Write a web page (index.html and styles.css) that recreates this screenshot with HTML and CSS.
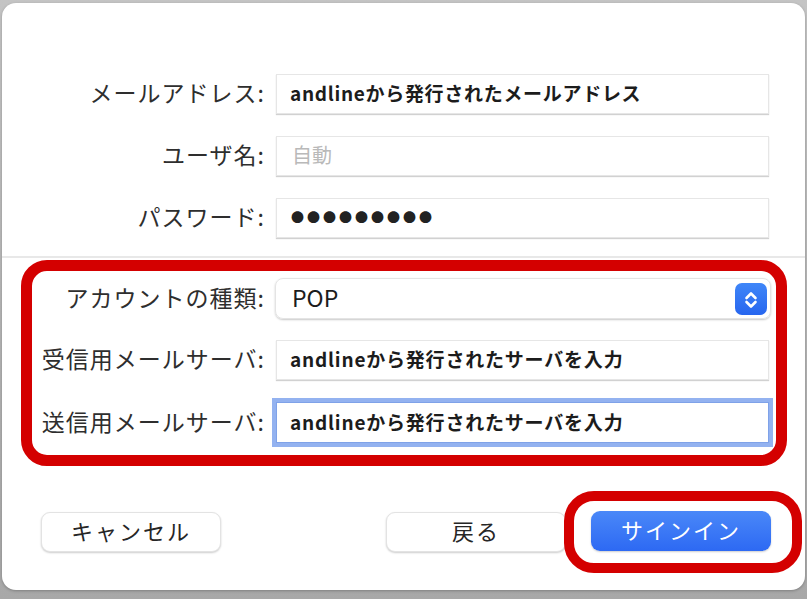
FILE: index.html
```html
<!DOCTYPE html>
<html lang="ja">
<head>
    <meta charset="UTF-8">
    <meta name="viewport" content="width=device-width, initial-scale=1.0">
    <title>アカウントを追加</title>
    <link rel="stylesheet" href="styles.css">
</head>
<body>
    <div class="dialog">
        <div class="account">
            <div class="row">
                <span class="label">メールアドレス:</span>
                <div class="field"><span class="value">andlineから発行されたメールアドレス</span></div>
            </div>
            <div class="row">
                <span class="label">ユーザ名:</span>
                <div class="field"><span class="placeholder">自動</span></div>
            </div>
            <div class="row">
                <span class="label">パスワード:</span>
                <div class="field"><span class="dots">●●●●●●●●●</span></div>
            </div>
        </div>

        <div class="server-box">
            <div class="row">
                <span class="label">アカウントの種類:</span>
                <div class="select">
                    <span class="select-value">POP</span>
                    <span class="stepper">
                        <svg width="32" height="32" viewBox="0 0 32 32">
                            <path d="M11.5 15 L16 10.5 L20.5 15" fill="none" stroke="#fff" stroke-width="2.6" stroke-linecap="round" stroke-linejoin="round"/>
                            <path d="M11.5 19 L16 23.5 L20.5 19" fill="none" stroke="#fff" stroke-width="2.6" stroke-linecap="round" stroke-linejoin="round"/>
                        </svg>
                    </span>
                </div>
            </div>
            <div class="row">
                <span class="label">受信用メールサーバ:</span>
                <div class="field"><span class="value wide">andlineから発行されたサーバを入力</span></div>
            </div>
            <div class="row">
                <span class="label">送信用メールサーバ:</span>
                <div class="field focused"><span class="value wide">andlineから発行されたサーバを入力</span></div>
            </div>
        </div>

        <div class="actions">
            <button class="btn">キャンセル</button>
            <button class="btn back">戻る</button>
            <span class="mark"><button class="btn primary">サインイン</button></span>
        </div>
    </div>
</body>
</html>
```

FILE: styles.css
```css
/* Base */
* {
    box-sizing: border-box;
}

:root {
    --label-color: #2e2e2e;
    --text-color: #1c1c1c;
    --mark-red: #d40000;
    --blue-top: #4a88f8;
    --blue-bottom: #2d69f3;
}

body {
    margin: 0;
    width: 807px;
    height: 599px;
    overflow: hidden;
    background: linear-gradient(#c4c4c4, #a8a8a8);
    font-family: "Noto Sans CJK JP", "Noto Sans", sans-serif;
    color: var(--label-color);
}

.dialog {
    margin: 3px 2px 0;
    width: 803px;
    height: 587px;
    background: #fff;
    border-radius: 14px;
    box-shadow: 0 1px 3px rgba(0, 0, 0, 0.25);
}

/* Rows */
.row {
    display: flex;
    align-items: center;
    gap: 11px;
}

.label {
    flex: none;
    text-align: right;
    font-size: 23px;
    line-height: 1;
    padding-bottom: 3px;
    letter-spacing: 1px;
    white-space: nowrap;
}

.account {
    display: flex;
    flex-direction: column;
    gap: 22px;
    padding: 71px 36px 18px 0;
    border-bottom: 2px solid #e8e8e8;
}

.account .label {
    width: 263px;
}

.field {
    flex: none;
    width: 493px;
    height: 40px;
    display: flex;
    align-items: center;
    padding: 0 0 3px 13px;
    background: #fff;
    border: 1px solid #e6e6e6;
    box-shadow: 0 1px 1px rgba(0, 0, 0, 0.18);
}

.value {
    font-size: 19px;
    font-weight: bold;
    letter-spacing: 0.7px;
    color: var(--text-color);
    white-space: nowrap;
}

.value.wide {
    letter-spacing: 0.8px;
}

.placeholder {
    font-size: 20px;
    color: #b9b9b9;
    padding-left: 2px;
}

.dots {
    font-size: 13px;
    letter-spacing: 3px;
    color: #222;
    padding-left: 1px;
}

/* Red mark around server settings */
.server-box {
    display: flex;
    flex-direction: column;
    margin: 2px 0 0 19px;
    width: 766px;
    padding: 7px 7px 12px 0;
    border: 11px solid var(--mark-red);
    border-radius: 26px;
}

.server-box .row + .row {
    margin-top: 21px;
}

.server-box .row:last-child {
    margin-top: 22px;
}

.server-box .label {
    width: 233px;
}

.select {
    flex: none;
    width: 496px;
    height: 41px;
    margin-left: -1px;
    display: flex;
    align-items: center;
    justify-content: space-between;
    padding: 0 3px 0 16px;
    border: 1px solid #e4e4e4;
    border-radius: 8px;
    box-shadow: 0 1px 2px rgba(0, 0, 0, 0.22);
}

.select-value {
    font-size: 23px;
    line-height: 1;
    padding-bottom: 3px;
    color: var(--text-color);
}

.stepper {
    width: 32px;
    height: 32px;
    display: flex;
    border-radius: 7px;
    background: linear-gradient(#3f86f8, #2766ef);
}

.field.focused {
    height: 41px;
    box-shadow: 0 0 0 4px #93b2f0;
    border-color: #7fa2e8;
}

/* Buttons */
.actions {
    display: flex;
    align-items: center;
    margin-top: 25px;
    padding: 0 3px 0 39px;
}

.btn {
    width: 180px;
    height: 40px;
    font-family: inherit;
    font-size: 22px;
    line-height: 1;
    letter-spacing: 2px;
    color: #262626;
    background: #fff;
    border: 1px solid #e3e3e3;
    border-radius: 9px;
    box-shadow: 0 1px 2px rgba(0, 0, 0, 0.2);
    padding: 0 0 4px;
}

.back {
    margin-left: auto;
}

.mark {
    display: flex;
    margin-left: -2px;
    padding: 10px 21px 12px 17px;
    border: 10px solid var(--mark-red);
    border-radius: 30px;
}

.btn.primary {
    color: #fff;
    border: none;
    background: linear-gradient(var(--blue-top), var(--blue-bottom));
}
```
